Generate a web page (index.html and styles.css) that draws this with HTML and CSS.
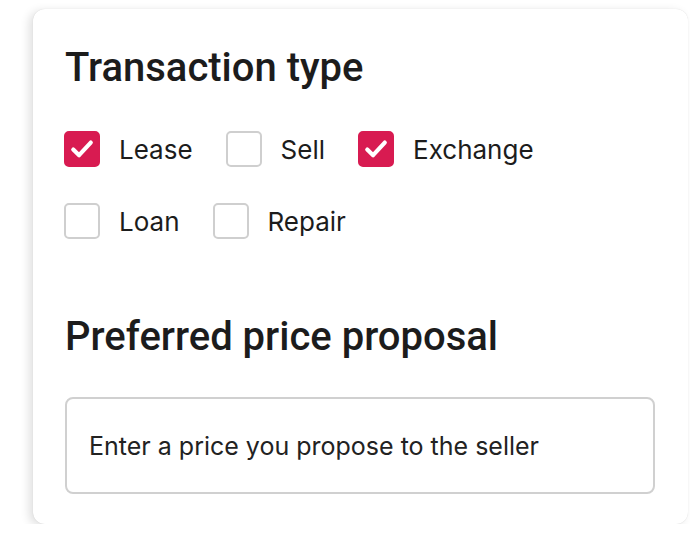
FILE: index.html
```html
<!DOCTYPE html>
<html>
<head>
  <meta charset="UTF-8" />
  <title>Transaction type</title>
  <link rel="stylesheet" href="styles.css">
</head>
<body>
  <div class="card">
    <h2>Transaction type</h2>
    <div class="options">
      <div class="row">
        <label class="option"><span class="box checked"><svg viewBox="0 0 24 24"><path d="M4.5 12.5l5 4.8L19.5 6.5" /></svg></span>Lease</label>
        <label class="option"><span class="box"></span>Sell</label>
        <label class="option"><span class="box checked"><svg viewBox="0 0 24 24"><path d="M4.5 12.5l5 4.8L19.5 6.5" /></svg></span>Exchange</label>
      </div>
      <div class="row">
        <label class="option"><span class="box"></span>Loan</label>
        <label class="option"><span class="box"></span>Repair</label>
      </div>
    </div>

    <h2 class="second">Preferred price proposal</h2>
    <div class="price-input">Enter a price you propose to the seller</div>
  </div>
</body>
</html>
```

FILE: styles.css
```css
body {
  margin: 0;
  background: #fff;
  font-family: Inter, "Noto Sans", sans-serif;
  color: #1c1c1c;
}

.card {
  box-sizing: border-box;
  margin: 9px 0 0 33px;
  width: 655px;
  height: 515px;
  padding: 34px 32px 0 31px;
  background: #fff;
  border-radius: 12px;
  box-shadow: -4px 2px 10px rgba(0, 0, 0, 0.12), 0 0 1px rgba(0, 0, 0, 0.15);
}

h2 {
  margin: 0 0 0 1px;
  font-family: Roboto, "Noto Sans", sans-serif;
  font-size: 40px;
  font-weight: 500;
  line-height: 50px;
}

.options {
  display: flex;
  flex-direction: column;
  gap: 36px;
  margin-top: 38px;
}

.row {
  display: flex;
  gap: 33px;
}

.option {
  display: flex;
  align-items: center;
  font-size: 26px;
  height: 36px;
}

.box {
  width: 32px;
  height: 32px;
  border: 2px solid #cfcfcf;
  border-radius: 5px;
  margin-right: 19px;
  display: flex;
  align-items: center;
  justify-content: center;
}

.box.checked {
  background: #d81b51;
  border-color: #d81b51;
}

.box svg {
  width: 28px;
  height: 28px;
  fill: none;
  stroke: #fff;
  stroke-width: 3.6;
  stroke-linecap: round;
  stroke-linejoin: round;
}

.second {
  margin-top: 73px;
}

.price-input {
  box-sizing: border-box;
  margin: 35px 1px 0 1px;
  height: 97px;
  border: 2px solid #d0d0d0;
  border-radius: 8px;
  padding-left: 22px;
  display: flex;
  align-items: center;
  font-size: 25px;
  color: #222;
}
```
